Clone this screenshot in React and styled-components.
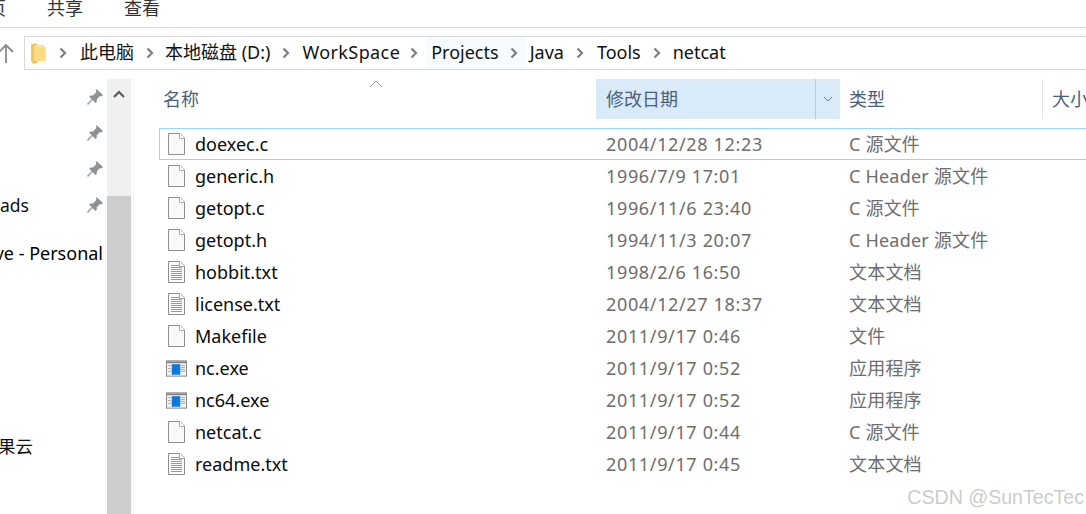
import React from "react";
import styled, { createGlobalStyle } from "styled-components";

const GlobalStyle = createGlobalStyle`
  html, body {
    margin: 0;
    padding: 0;
    background: #fff;
    overflow: hidden;
  }
  body {
    font-family: "Noto Sans", "Noto Sans CJK SC", sans-serif;
    font-size: 18px;
  }
`;

const Page = styled.div`
  position: relative;
  width: 1086px;
  height: 514px;
  overflow: hidden;
  display: flex;
  flex-direction: column;
`;

const Ribbon = styled.div`
  height: 27px;
  flex: none;
  display: flex;
  gap: 41px;
  padding-left: 47px;
  border-bottom: 1px solid #dadada;
  box-sizing: content-box;
  overflow: hidden;
  position: relative;
`;

const RibbonTab = styled.span`
  font-size: 18px;
  line-height: 17px;
  color: #333;
  margin-left: ${(p) => p.$ml || 0}px;
`;

const AddressRow = styled.div`
  flex: none;
  height: 34px;
  margin-top: 8px;
  display: flex;
  align-items: center;
`;

const UpArrow = styled.div`
  width: 24px;
  flex: none;
  display: flex;
  margin-left: -2px;
  margin-right: 2px;
`;

const AddressBox = styled.div`
  flex: 1;
  height: 34px;
  box-sizing: border-box;
  border: 1px solid #d9d9d9;
  border-right: none;
  display: flex;
  align-items: center;
  padding-left: 6px;
`;

const Crumb = styled.span`
  font-size: 18px;
  line-height: 30px;
  height: 30px;
  padding-bottom: 2px;
  color: #111;
  white-space: nowrap;
  letter-spacing: ${(p) => p.$spacing || 0}px;
  margin-left: ${(p) => p.$ml || 0}px;
`;

const HoverCrumb = styled(Crumb)`
  background: #f5fbff;
  padding: 0 4px 2px;
`;

const ChevronCell = styled.span`
  display: flex;
  align-items: center;
  justify-content: center;
  width: ${(p) => p.$w}px;
  flex: none;
  height: 32px;
  background: ${(p) => (p.$hover ? "#f5fbff" : "transparent")};
`;

const Body = styled.div`
  flex: 1;
  min-height: 0;
  display: flex;
  margin-top: 9px;
`;

const Sidebar = styled.div`
  width: 107px;
  flex: none;
  overflow: hidden;
`;

const NavRow = styled.div`
  height: ${(p) => p.$h || 36}px;
  margin-top: ${(p) => p.$mt || 0}px;
  display: flex;
  align-items: center;
  justify-content: flex-end;
  padding-right: 4px;
  white-space: nowrap;
`;

const NavLabel = styled.span`
  font-size: 17.5px;
  color: #111;
  margin-right: ${(p) => p.$mr || 0}px;
`;

const PinSvg = styled.svg`
  flex: none;
`;

const Scrollbar = styled.div`
  width: 24px;
  flex: none;
  background: #f0f0f0;
  display: flex;
  flex-direction: column;
`;

const ScrollButton = styled.div`
  height: 30px;
  display: flex;
  justify-content: center;
  align-items: center;
`;

const ScrollTrack = styled.div`
  height: 87px;
  flex: none;
`;

const ScrollThumb = styled.div`
  flex: 1;
  background: #cdcdcd;
`;

const Content = styled.div`
  flex: 1;
  min-width: 0;
  margin-left: 2px;
  border-left: 1px solid #f3f3f3;
  display: flex;
  flex-direction: column;
  position: relative;
`;

const HeaderRow = styled.div`
  display: grid;
  grid-template-columns: 462px 244px 203px 1fr;
  height: 40px;
  flex: none;
`;

const HeaderCell = styled.div`
  display: flex;
  align-items: center;
  font-size: 18px;
  color: #4c607a;
  white-space: nowrap;
  overflow: hidden;
  padding-left: ${(p) => p.$pl}px;
  padding-bottom: ${(p) => (p.$active ? 0 : 2)}px;
  background: ${(p) => (p.$active ? "#d9ebf9" : "transparent")};
  border-right: ${(p) => (p.$divider ? "1px solid #e5e5e5" : "none")};
`;

const HeaderLabel = styled.span`
  flex: 1;
  padding-bottom: 2px;
`;

const DropCell = styled.span`
  width: 24px;
  height: 40px;
  flex: none;
  border-left: 1px solid #b5cde0;
  display: flex;
  align-items: center;
  justify-content: center;
`;

const SortCaret = styled.svg`
  position: absolute;
  left: 235px;
  top: 1px;
`;

const FileList = styled.div`
  margin-top: 9px;
  margin-left: 25px;
`;

const FileRow = styled.div`
  display: grid;
  grid-template-columns: 446px 243px 1fr;
  height: 32px;
  box-sizing: border-box;
  align-items: center;
  margin-right: -2px;
  border: 1px solid ${(p) => (p.$selected ? "#99d1ff" : "transparent")};
`;

const NameCell = styled.div`
  display: flex;
  align-items: center;
  color: #0a0a0a;
  font-size: 18px;
`;

const IconSlot = styled.span`
  width: 22px;
  height: 22px;
  margin-left: 5px;
  margin-right: 8px;
  flex: none;
  display: flex;
  align-items: center;
  justify-content: center;
`;

const ExeSvg = styled.svg`
  flex: none;
`;

const DateCell = styled.div`
  color: #6d6d6d;
  font-size: 18px;
  letter-spacing: 0.65px;
  white-space: nowrap;
`;

const TypeCell = styled.div`
  color: #6d6d6d;
  font-size: 18px;
  letter-spacing: 0.2px;
  padding-bottom: 2px;
  white-space: nowrap;
`;

const Watermark = styled.div`
  position: absolute;
  right: 2px;
  bottom: 5px;
  font-family: "Liberation Sans", Arial, sans-serif;
  font-size: 19.6px;
  color: rgba(150, 150, 150, 0.5);
  white-space: nowrap;
`;

function PlainFileIcon() {
  return (
    <svg width="17" height="22" viewBox="0 0 17 22">
      <path d="M.5.5H12L16.5 5V21.5H.5Z" fill="#f8f9fb" stroke="#8f8f8f" />
      <path d="M11.5.5V5.5H16.5" fill="#fff" stroke="#a8a8a8" />
    </svg>
  );
}

function TextFileIcon() {
  return (
    <svg width="17" height="22" viewBox="0 0 17 22">
      <path d="M.5.5H12L16.5 5V21.5H.5Z" fill="#fbfbfb" stroke="#8f8f8f" />
      <path d="M11.5.5V5.5H16.5" fill="#fff" stroke="#a8a8a8" />
      <path
        d="M3 4.5H11M3 6.5H14M3 8.5H14M3 10.5H14M3 12.5H14M3 14.5H14M3 16.5H14M3 18.5H14"
        stroke="#9a9a9a"
      />
    </svg>
  );
}

function ExeIcon() {
  return (
    <ExeSvg width="21" height="17" viewBox="0 0 22 17">
      <rect x=".5" y=".5" width="21" height="16" fill="#f2f2f2" stroke="#868686" />
      <rect x="1" y="1" width="20" height="2" fill="#868686" />
      <rect x="6" y="4" width="9" height="11" fill="#0a78dc" />
      <path d="M2 5.5H5M2 8.5H5M2 11.5H5M16 5.5H20M16 7.5H20M16 9.5H20M16 11.5H20" stroke="#a5a5a5" />
    </ExeSvg>
  );
}

function Chevron() {
  return (
    <svg width="8" height="12" viewBox="0 0 8 12">
      <path d="M1.5 1.5 6 6 1.5 10.5" fill="none" stroke="#7f7f7f" strokeWidth="2.2" />
    </svg>
  );
}

function PinIcon() {
  return (
    <PinSvg width="16" height="16" viewBox="0 0 16 16">
      <path d="M9.5 0 16 6 14.5 7.5 13 7 9.8 10.2 9.8 12.8 8.5 14 2.2 7.8 3.6 6.4 6 6.4 9.3 3 9 1.2Z" fill="#8c9196" />
      <path d="M5 10.5 .5 15.5" stroke="#a4a8ac" strokeWidth="1.6" />
    </PinSvg>
  );
}

function FolderIcon() {
  return (
    <svg width="15" height="21" viewBox="0 0 15 21">
      <path d="M0 1.5 5.5 0 6.5 2V20L2 21 0 18Z" fill="#f0c75e" />
      <path d="M5 2H13V4H14.5V18H3V4Z" fill="#ffe08c" />
      <path d="M3 4H14.5V18H3Z" fill="#fbdc83" />
    </svg>
  );
}

const files = [
  { name: "doexec.c", date: "2004/12/28 12:23", type: "C 源文件", icon: "plain", selected: true },
  { name: "generic.h", date: "1996/7/9 17:01", type: "C Header 源文件", icon: "plain" },
  { name: "getopt.c", date: "1996/11/6 23:40", type: "C 源文件", icon: "plain" },
  { name: "getopt.h", date: "1994/11/3 20:07", type: "C Header 源文件", icon: "plain" },
  { name: "hobbit.txt", date: "1998/2/6 16:50", type: "文本文档", icon: "text" },
  { name: "license.txt", date: "2004/12/27 18:37", type: "文本文档", icon: "text" },
  { name: "Makefile", date: "2011/9/17 0:46", type: "文件", icon: "plain" },
  { name: "nc.exe", date: "2011/9/17 0:52", type: "应用程序", icon: "exe" },
  { name: "nc64.exe", date: "2011/9/17 0:52", type: "应用程序", icon: "exe" },
  { name: "netcat.c", date: "2011/9/17 0:44", type: "C 源文件", icon: "plain" },
  { name: "readme.txt", date: "2011/9/17 0:45", type: "文本文档", icon: "text" },
];

const icons = { plain: PlainFileIcon, text: TextFileIcon, exe: ExeIcon };

export default function App() {
  return (
    <Page>
      <GlobalStyle />
      <Ribbon>
        <RibbonTab $ml={-77}>主页</RibbonTab>
        <RibbonTab>共享</RibbonTab>
        <RibbonTab>查看</RibbonTab>
      </Ribbon>

      <AddressRow>
        <UpArrow>
          <svg width="16" height="20" viewBox="0 0 16 20">
            <path d="M8 20V2M1 9 8 2 15 9" fill="none" stroke="#8a8a8a" strokeWidth="1.8" />
          </svg>
        </UpArrow>
        <AddressBox>
          <FolderIcon />
          <ChevronCell $w={34}><Chevron /></ChevronCell>
          <Crumb>此电脑</Crumb>
          <ChevronCell $w={31}><Chevron /></ChevronCell>
          <Crumb>本地磁盘 (D:)</Crumb>
          <ChevronCell $w={32}><Chevron /></ChevronCell>
          <Crumb $spacing={0.4}>WorkSpace</Crumb>
          <ChevronCell $w={27}><Chevron /></ChevronCell>
          <HoverCrumb>Projects</HoverCrumb>
          <ChevronCell $w={22} $hover><Chevron /></ChevronCell>
          <Crumb $ml={5}>Java</Crumb>
          <ChevronCell $w={33}><Chevron /></ChevronCell>
          <Crumb>Tools</Crumb>
          <ChevronCell $w={32}><Chevron /></ChevronCell>
          <Crumb>netcat</Crumb>
        </AddressBox>
      </AddressRow>

      <Body>
        <Sidebar>
          <NavRow><PinIcon /></NavRow>
          <NavRow><PinIcon /></NavRow>
          <NavRow><PinIcon /></NavRow>
          <NavRow>
            <NavLabel $mr={58}>Downloads</NavLabel>
            <PinIcon />
          </NavRow>
          <NavRow $h={32} $mt={14}>OneDrive - Personal</NavRow>
          <NavRow $h={32} $mt={160}>
            <NavLabel $mr={70}>坚果云</NavLabel>
          </NavRow>
        </Sidebar>

        <Scrollbar>
          <ScrollButton>
            <svg width="12" height="8" viewBox="0 0 12 8">
              <path d="M1 7 6 2 11 7" fill="none" stroke="#555" strokeWidth="2" />
            </svg>
          </ScrollButton>
          <ScrollTrack />
          <ScrollThumb />
        </Scrollbar>

        <Content>
          <SortCaret width="14" height="8" viewBox="0 0 14 8">
            <path d="M1 7 7 1 13 7" fill="none" stroke="#9a9a9a" />
          </SortCaret>
          <HeaderRow>
            <HeaderCell $pl={29}>名称</HeaderCell>
            <HeaderCell $pl={10} $active>
              <HeaderLabel>修改日期</HeaderLabel>
              <DropCell>
                <svg width="10" height="6" viewBox="0 0 10 6">
                  <path d="M1 1 5 5 9 1" fill="none" stroke="#6b7a88" />
                </svg>
              </DropCell>
            </HeaderCell>
            <HeaderCell $pl={9} $divider>类型</HeaderCell>
            <HeaderCell $pl={9}>大小</HeaderCell>
          </HeaderRow>
          <FileList>
            {files.map((file) => {
              const Icon = icons[file.icon];
              return (
                <FileRow key={file.name} $selected={file.selected}>
                  <NameCell>
                    <IconSlot><Icon /></IconSlot>
                    {file.name}
                  </NameCell>
                  <DateCell>{file.date}</DateCell>
                  <TypeCell>{file.type}</TypeCell>
                </FileRow>
              );
            })}
          </FileList>
          <Watermark>CSDN @SunTecTec</Watermark>
        </Content>
      </Body>
    </Page>
  );
}
